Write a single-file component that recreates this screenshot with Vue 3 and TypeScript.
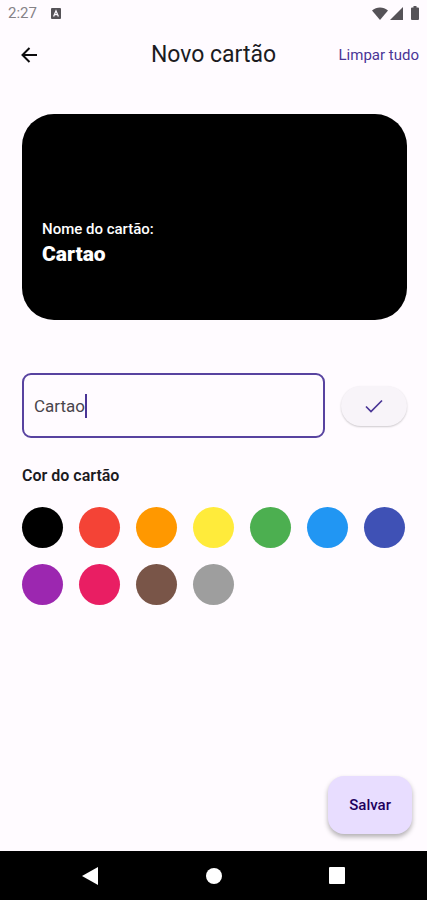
<script setup lang="ts">
import { ref } from 'vue'

interface Swatch {
  label: string
  value: string
}

const swatches: Swatch[] = [
  { label: 'Preto', value: '#000000' },
  { label: 'Vermelho', value: '#f44336' },
  { label: 'Laranja', value: '#ff9800' },
  { label: 'Amarelo', value: '#ffeb3b' },
  { label: 'Verde', value: '#4caf50' },
  { label: 'Azul', value: '#2196f3' },
  { label: 'Índigo', value: '#3f51b5' },
  { label: 'Roxo', value: '#9c27b0' },
  { label: 'Rosa', value: '#e91e63' },
  { label: 'Marrom', value: '#795548' },
  { label: 'Cinza', value: '#9e9e9e' },
]

const draft = ref('Cartao')
const name = ref('Cartao')
const color = ref('#000000')

function confirmName(): void {
  name.value = draft.value
}

function clearAll(): void {
  draft.value = ''
  name.value = ''
  color.value = '#000000'
}
</script>

<template>
  <div class="screen">
    <div class="status">
      <div class="status-side">
        <span>2:27</span>
        <svg class="badge" viewBox="0 0 10 11" aria-hidden="true">
          <rect width="10" height="11" rx="1" fill="#555257" />
          <path d="M2.6 8.4 5 2.8l2.4 5.6M3.5 6.7h3" fill="none" stroke="#fdf9ff" stroke-width="1.3" />
        </svg>
      </div>
      <div class="status-side status-icons">
        <svg class="wifi" viewBox="0 0 16 13" aria-hidden="true">
          <path d="M0 3.4C4.6-.6 11.4-.6 16 3.4L8 13z" />
        </svg>
        <svg class="signal" viewBox="0 0 13 13" aria-hidden="true">
          <path d="M13 0v13H0z" />
        </svg>
        <svg class="battery" viewBox="0 0 8 14" aria-hidden="true">
          <path d="M2.5 0h3v1.5H7q1 0 1 1V13q0 1-1 1H1q-1 0-1-1V2.500q0-1 1-1h1.500z" />
        </svg>
      </div>
    </div>

    <header class="bar">
      <div class="bar-side">
        <button class="back" type="button" aria-label="Voltar">
          <svg viewBox="0 0 18 18" aria-hidden="true">
            <path d="M17 9H3M9.500 2 2.500 9 9.500 16" fill="none" stroke="#0c0b0d" stroke-width="2" />
          </svg>
        </button>
      </div>
      <h1>Novo cartão</h1>
      <div class="bar-side bar-end">
        <button class="clear" type="button" @click="clearAll">Limpar tudo</button>
      </div>
    </header>

    <main>
      <section class="card" :style="{ backgroundColor: color }">
        <p class="card-label">Nome do cartão:</p>
        <p class="card-name">{{ name }}</p>
      </section>

      <form class="row" @submit.prevent="confirmName">
        <label class="field">
          <input v-model="draft" class="field-input" type="text" aria-label="Nome do cartão" />
          <span class="caret"></span>
        </label>
        <button class="confirm" type="submit" aria-label="Confirmar nome">
          <svg viewBox="0 0 18 14" aria-hidden="true">
            <path d="M1 7.500 6 12.500 17 1.500" fill="none" stroke="#4a3596" stroke-width="1.700" />
          </svg>
        </button>
      </form>

      <fieldset class="colors">
        <legend>Cor do cartão</legend>
        <div class="swatches">
          <input
            v-for="s in swatches"
            :key="s.value"
            v-model="color"
            class="swatch"
            type="radio"
            name="color"
            :value="s.value"
            :aria-label="s.label"
            :style="{ backgroundColor: s.value }"
          />
        </div>
      </fieldset>
    </main>

    <div class="actions">
      <button class="save" type="button">Salvar</button>
    </div>

    <nav class="system">
      <button type="button" aria-label="Voltar">
        <svg viewBox="0 0 18 18" aria-hidden="true"><path d="M16 0v18L0 9z" fill="#fff" /></svg>
      </button>
      <button type="button" aria-label="Início">
        <svg viewBox="0 0 18 18" aria-hidden="true"><circle cx="9" cy="9" r="8" fill="#fff" /></svg>
      </button>
      <button type="button" aria-label="Recentes">
        <svg viewBox="0 0 18 18" aria-hidden="true"><rect x="1" y="0" width="16" height="17" rx="1" fill="#fff" /></svg>
      </button>
    </nav>
  </div>
</template>

<style>
body {
  background: #fffbff;
}
</style>

<style scoped>
.screen {
  display: flex;
  flex-direction: column;
  min-height: 100vh;
  background: #fffbff;
  color: #1c1b1f;
  font-family: Roboto, 'Liberation Sans', sans-serif;
}

button {
  padding: 0;
  border: 0;
  background: none;
  font: inherit;
  cursor: pointer;
}

svg {
  display: block;
}

.status {
  display: flex;
  justify-content: space-between;
  align-items: center;
  height: 26px;
  padding: 0 8px;
  color: #858287;
  font-size: 15px;
}

.status-side {
  display: flex;
  align-items: center;
  gap: 14px;
}

.status-icons {
  gap: 2px;
  fill: #555257;
}

.badge {
  width: 10px;
  height: 11px;
}

.wifi {
  width: 16px;
  height: 13px;
}

.signal {
  width: 13px;
  height: 13px;
}

.battery {
  width: 8px;
  height: 14px;
  margin-left: 6px;
}

.bar {
  display: flex;
  align-items: center;
  height: 58px;
  padding: 0 8px;
}

.bar-side {
  display: flex;
  flex: 1;
}

.bar-end {
  justify-content: flex-end;
}

.back {
  padding: 12px;
}

.back svg {
  width: 18px;
  height: 18px;
}

h1 {
  margin: 0;
  font-size: 23px;
  font-weight: 400;
  line-height: 28px;
}

.clear {
  color: #4a3596;
  font-size: 15px;
  font-weight: 400;
  line-height: 20px;
  white-space: nowrap;
}

main {
  padding: 30px 20px 0 22px;
}

.card {
  display: flex;
  flex-direction: column;
  justify-content: flex-end;
  min-height: 206px;
  padding: 20px 20px 53px;
  border-radius: 32px;
  box-sizing: border-box;
  color: #fff;
}

.card p {
  margin: 0;
}

.card-label {
  font-size: 15px;
  font-weight: 500;
  line-height: 24px;
}

.card-name {
  font-size: 21px;
  font-weight: 900;
  line-height: 26px;
}

.row {
  display: flex;
  align-items: center;
  gap: 16px;
  margin-top: 53px;
}

.field {
  display: flex;
  flex: 1;
  align-items: center;
  height: 65px;
  padding: 0 10px;
  border: 2px solid #5843a0;
  border-radius: 9px;
  box-sizing: border-box;
  cursor: text;
}

.field-input {
  field-sizing: content;
  min-width: 1px;
  max-width: 100%;
  padding: 0;
  border: 0;
  outline: 0;
  background: none;
  color: #49454c;
  caret-color: transparent;
  font: inherit;
  font-size: 17px;
  line-height: 24px;
}

.caret {
  width: 2px;
  height: 24px;
  background: #4a3596;
}

.confirm {
  display: flex;
  align-items: center;
  justify-content: center;
  width: 66px;
  height: 40px;
  border-radius: 20px;
  background: #f8f4f9;
  box-shadow: 0 1px 2px rgb(0 0 0 / 20%);
}

.confirm svg {
  width: 18px;
  height: 14px;
}

.colors {
  min-width: 0;
  margin: 26px 0 0;
  padding: 0;
  border: 0;
}

legend {
  padding: 0;
  font-size: 16px;
  font-weight: 600;
  line-height: 24px;
}

.swatches {
  display: flex;
  flex-wrap: wrap;
  gap: 16px;
  margin-top: 19px;
}

.swatch {
  width: 41px;
  height: 41px;
  margin: 0;
  border-radius: 50%;
  appearance: none;
  cursor: pointer;
}

.actions {
  display: flex;
  justify-content: flex-end;
  margin-top: auto;
  padding: 16px 15px 17px;
}

.save {
  height: 58px;
  padding: 0 21px;
  border-radius: 16px;
  background: #e8ddff;
  box-shadow: 0 3px 5px rgb(0 0 0 / 30%);
  color: #21005d;
  font-size: 15px;
  font-weight: 500;
}

.system {
  display: flex;
  justify-content: center;
  align-items: center;
  gap: 105px;
  height: 49px;
  background: #000;
}

.system svg {
  width: 18px;
  height: 18px;
}
</style>
